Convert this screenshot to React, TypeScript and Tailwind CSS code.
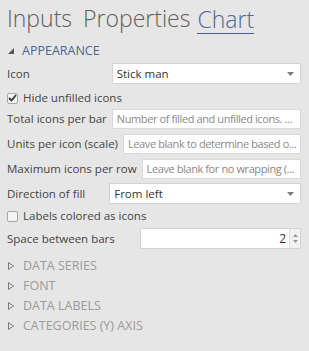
import React from "react";

const font = { fontFamily: '"Open Sans", "Noto Sans", sans-serif' };

function Caret() {
  return (
    <svg width="7" height="4" viewBox="0 0 7 4" className="shrink-0">
      <path d="M0 0 L7 0 L3.5 4 Z" fill="#7a7a7a" />
    </svg>
  );
}

function Select({ value }: { value: string }) {
  return (
    <div className="flex-1 h-[21px] bg-white border border-[#d4d4d4] flex items-center justify-between pl-[4px] pr-[6px] text-[11.5px] text-[#333]">
      <span>{value}</span>
      <Caret />
    </div>
  );
}

function Input({ placeholder }: { placeholder: string }) {
  return (
    <div className="flex-1 min-w-0 h-[20px] bg-white border border-[#d9d9d9] flex items-center pl-[4px] text-[11px] tracking-[-0.4px] text-[#8a8a8a] whitespace-nowrap overflow-hidden">
      {placeholder}
    </div>
  );
}

function Row({ label, className, children }: { label: string; className: string; children: React.ReactNode }) {
  return (
    <div className={"flex items-center gap-[5px] pl-[7px] pr-[8px] " + className}>
      <span className="text-[11.5px] text-[#444] whitespace-nowrap">{label}</span>
      {children}
    </div>
  );
}

function Check({ checked, label, className }: { checked: boolean; label: string; className: string }) {
  return (
    <div className={"flex items-center gap-[5px] pl-[7px] h-[16px] text-[11.5px] text-[#444] " + className}>
      <div className="w-[11px] h-[11px] border border-[#a8a8a8] bg-[#f4f4f4] rounded-[2px] flex items-center justify-center">
        {checked && (
          <svg width="9" height="8" viewBox="0 0 9 8">
            <path d="M1 4 L3.5 6.5 L8 1" stroke="#333" strokeWidth="1.8" fill="none" />
          </svg>
        )}
      </div>
      <span>{label}</span>
    </div>
  );
}

function Section({ label }: { label: string }) {
  return (
    <div className="flex items-center gap-[9px] pl-[8px] h-[20px] text-[12.5px] text-[#9a9a9a]">
      <svg width="6" height="8" viewBox="0 0 6 8">
        <path d="M0.5 0.5 L5.5 4 L0.5 7.5 Z" fill="none" stroke="#777" strokeWidth="1" />
      </svg>
      <span>{label}</span>
    </div>
  );
}

export default function App() {
  return (
    <div className="w-[309px] h-[351px] bg-[#e6e6e6] overflow-hidden" style={font}>
      <div className="flex items-end pl-[7px] pt-[1px] h-[34px] text-[23px] font-light text-[#5e5e5e] leading-none">
        <span className="pb-[4px]">Inputs</span>
        <span className="pb-[4px] ml-[11px]">Properties</span>
        <span className="pb-[2px] ml-[7px] border-b-[1.5px] border-[#4a5f8a] text-[#4f6794]">Chart</span>
      </div>
      <div className="flex items-center gap-[8px] pl-[8px] mt-[9px] h-[16px] text-[12.5px] text-[#4a6597]">
        <svg width="6" height="6" viewBox="0 0 6 6">
          <path d="M6 0 L6 6 L0 6 Z" fill="#555" />
        </svg>
        <span>APPEARANCE</span>
      </div>
      <Row label="Icon" className="mt-[4px]">
        <div className="flex-1 pl-[77px] flex">
          <Select value="Stick man" />
        </div>
      </Row>
      <Check checked label="Hide unfilled icons" className="mt-[6px]" />
      <Row label="Total icons per bar" className="mt-[3px]">
        <Input placeholder="Number of filled and unfilled icons. ..." />
      </Row>
      <Row label="Units per icon (scale)" className="mt-[5px]">
        <Input placeholder="Leave blank to determine based o..." />
      </Row>
      <Row label="Maximum icons per row" className="mt-[5px]">
        <Input placeholder="Leave blank for no wrapping (..." />
      </Row>
      <Row label="Direction of fill" className="mt-[4px]">
        <div className="flex-1 pl-[19px] flex">
          <Select value="From left" />
        </div>
      </Row>
      <Check checked={false} label="Labels colored as icons" className="mt-[4px]" />
      <Row label="Space between bars" className="mt-[4px]">
        <div className="flex-1 pl-[20px] flex">
          <div className="flex-1 h-[21px] bg-white border border-[#d4d4d4] flex items-center justify-end text-[12px] text-[#333]">
            <span className="pr-[3px]">2</span>
            <div className="w-[11px] h-full flex flex-col items-center justify-center gap-[3px] bg-[#f2f2f2] border-l border-[#e0e0e0]">
              <svg width="5" height="3" viewBox="0 0 5 3"><path d="M0 3 L2.5 0 L5 3 Z" fill="#999" /></svg>
              <svg width="5" height="3" viewBox="0 0 5 3"><path d="M0 0 L2.5 3 L5 0 Z" fill="#999" /></svg>
            </div>
          </div>
        </div>
      </Row>
      <div className="flex flex-col mt-[7px]">
        <Section label="DATA SERIES" />
        <Section label="FONT" />
        <Section label="DATA LABELS" />
        <Section label="CATEGORIES (Y) AXIS" />
      </div>
    </div>
  );
}
